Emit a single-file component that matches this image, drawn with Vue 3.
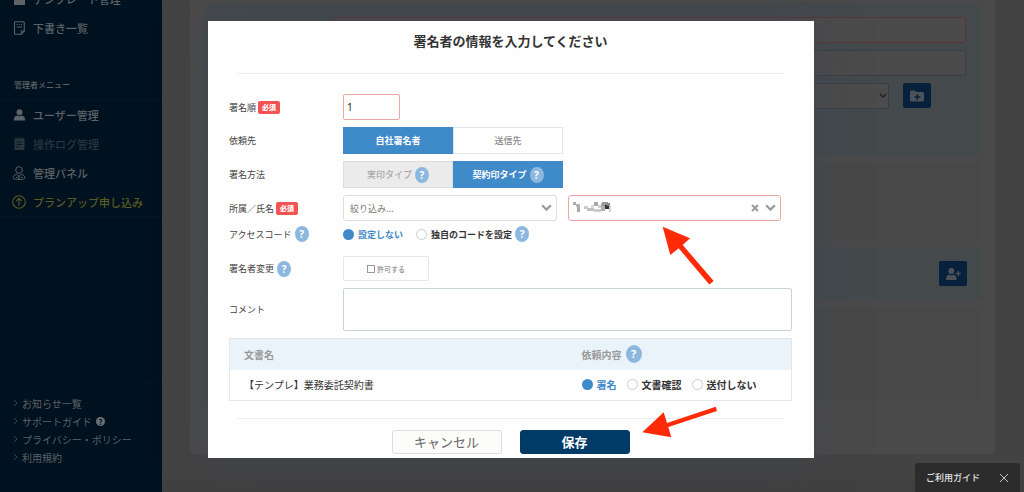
<script setup>
import { ref } from 'vue'

const order = ref('1')
const comment = ref('')
const accessCode = ref('none')
const request = ref('sign')
const allowChange = ref(false)

const adminMenu = [
  { label: 'ユーザー管理', icon: 'user' },
  { label: '操作ログ管理', icon: 'log', tone: 'faded' },
  { label: '管理パネル', icon: 'panel' },
  { label: 'プランアップ申し込み', icon: 'up', tone: 'plan' },
]
const footerLinks = [
  { label: 'お知らせ一覧' },
  { label: 'サポートガイド', help: true },
  { label: 'プライバシー・ポリシー' },
  { label: '利用規約' },
]
const requests = [
  { value: 'sign', label: '署名' },
  { value: 'check', label: '文書確認' },
  { value: 'skip', label: '送付しない' },
]
</script>

<template>
  <div class="page" lang="ja">
    <nav class="sidebar">
      <ul class="menu top-menu">
        <li>
          <a href="#">
            <svg class="icon" viewBox="0 0 14 14"><path d="M2 1h11v12H2z" fill="currentColor" /><path d="M5 4h5v4H5z" fill="#00111f" /></svg>
            <span>テンプレート管理</span>
          </a>
        </li>
        <li>
          <a href="#">
            <svg class="icon" viewBox="0 0 14 14" fill="none" stroke="currentColor" stroke-width="1.1"><path d="M3.5.7h7.800q1 0 1 1V10l-3 3.300H3.500q-1 0-1-1V1.700q0-1 1-1z" /><path d="M9.300 13.200V10h3M4.500 3.500h1M6.800 3.500h1M9 3.500h1.200M4.500 6h5.700" /></svg>
            <span>下書き一覧</span>
          </a>
        </li>
      </ul>
      <p class="menu-title">管理者メニュー</p>
      <ul class="menu admin-menu">
        <li v-for="item in adminMenu" :key="item.label">
          <a href="#" :class="item.tone">
            <svg v-if="item.icon === 'user'" class="icon" viewBox="0 0 14 14" fill="currentColor"><circle cx="7.500" cy="4.300" r="3" /><path d="M1.800 12.500c0-3.500 1.500-4.700 3.500-5.100q2.200 1.400 4.400 0c2 .4 3.500 1.600 3.500 5.100z" /></svg>
            <svg v-else-if="item.icon === 'log'" class="icon" viewBox="0 0 14 14"><path d="M2.500 1.500h10v11.500h-10z" fill="currentColor" /><path d="M4 .5v2M6.300.5v2M8.600.5v2M11 .5v2" stroke="currentColor" /><path d="M4.500 5h6M4.500 7.500h6M4.500 10h3" stroke="#00111f" stroke-width=".8" /></svg>
            <svg v-else-if="item.icon === 'panel'" class="icon" viewBox="0 0 14 14" fill="none" stroke="currentColor"><circle cx="7" cy="4" r="3.300" /><path d="M4.700 8.300C2.500 8.700 1.200 9.800 1.200 11.800c0 1 1.500 1.700 5.800 1.700s5.800-.7 5.800-1.700c0-2-1.300-3.100-3.500-3.500L7 10.500zM7 10v3M4 11.500h1.500M9 11.500h1.500" /></svg>
            <svg v-else class="icon" viewBox="0 0 14 14" fill="none" stroke="currentColor" stroke-width="1.100"><circle cx="7" cy="7" r="6.300" /><path d="M7 10.800V3.500M4.200 6.200 7 3.400l2.800 2.800" /></svg>
            <span>{{ item.label }}</span>
          </a>
        </li>
      </ul>
      <ul class="links">
        <li v-for="link in footerLinks" :key="link.label">
          <a href="#">
            <svg class="caret" viewBox="0 0 5 8" fill="none" stroke="#3a444d"><path d="m1 1 3 3-3 3" /></svg>
            <span>{{ link.label }}</span>
            <span v-if="link.help" class="mini-help">?</span>
          </a>
        </li>
      </ul>
    </nav>

    <main class="main">
      <div class="card">
        <section class="panel tinted fields">
          <input class="field required" type="text" aria-label="文書" />
          <input class="field" type="text" aria-label="メモ" />
          <div class="field-row">
            <div class="folder-select">
              <select class="field" aria-label="フォルダ"></select>
              <svg viewBox="0 0 8 6" fill="none" stroke="#152028" stroke-width="1.300"><path d="m1 1 3 3 3-3" /></svg>
            </div>
            <button class="square" type="button" aria-label="フォルダを追加">
              <svg viewBox="0 0 16 14"><path d="M1 3q0-1.500 1.500-1.500H6l1.500 1.500h6q1.500 0 1.500 1.500v6.500q0 1.500-1.500 1.500h-11Q1 12.500 1 11z" fill="#4c5258" /><path d="M8.300 5v6M5.300 8h6" stroke="#07203b" stroke-width="1.500" /></svg>
            </button>
          </div>
        </section>
        <section class="panel medium"></section>
        <section class="panel tinted signer">
          <button class="square" type="button" aria-label="署名者を追加">
            <svg viewBox="0 0 16 14" fill="#4c5258"><circle cx="6.300" cy="4" r="3" /><path d="M1 13c0-3.500 1-5 3-5.300q2.300 1.100 4.600 0c2 .3 3 1.800 3 5.300z" /><path d="M13.300 4v5M10.800 6.500h5" stroke="#4c5258" stroke-width="1.300" /></svg>
          </button>
        </section>
        <section class="panel tall"></section>
      </div>
      <footer class="page-footer"></footer>
    </main>

    <div class="overlay">
      <form class="modal" role="dialog" aria-labelledby="modal-title" @submit.prevent>
        <h2 id="modal-title">署名者の情報を入力してください</h2>
        <hr />
        <div class="form">
          <div class="row">
            <label class="label" for="order">署名順<span class="badge">必須</span></label>
            <input id="order" v-model="order" class="order" type="text" />
          </div>
          <div class="row">
            <span class="label">依頼先</span>
            <div class="toggle">
              <button type="button" class="on">自社署名者</button>
              <button type="button">送信先</button>
            </div>
          </div>
          <div class="row">
            <span class="label">署名方法</span>
            <div class="toggle">
              <button type="button" class="off" disabled>実印タイプ<span class="help">?</span></button>
              <button type="button" class="on">契約印タイプ<span class="help">?</span></button>
            </div>
          </div>
          <div class="row member-row">
            <label class="label" for="filter">所属／氏名<span class="badge">必須</span></label>
            <div class="selects">
              <div class="combo">
                <select id="filter"><option>絞り込み...</option></select>
                <svg class="chevron" viewBox="0 0 10 7" fill="none" stroke="#999" stroke-width="2"><path d="m1 1 4 4 4-4" /></svg>
              </div>
              <div class="combo invalid">
                <svg class="mosaic" viewBox="0 0 38 12">
                  <path d="M0 1h3v3H0z" fill="#aaa" /><path d="M3 3h4v3H3z" fill="#b5b5b5" /><path d="M4 6h3v5H4z" fill="#aaa" />
                  <path d="M11 5h4v3h-4z" fill="#ccc" /><path d="M14 7h7v3h-7z" fill="#c2c2c2" /><path d="M18 4h3v3h-3z" fill="#ddd" />
                  <path d="M21 1h4v4h-4z" fill="#aaa" /><path d="M25 4h4v3h-4z" fill="#d0d0d0" /><path d="M21 8h7v3h-7z" fill="#ccc" /><path d="M28 2h4v8h-4z" fill="#b0b0b0" />
                  <path d="M29 1h6v4h-6z" fill="#999" /><path d="M32 4h4v4h-4z" fill="#333" /><path d="M34 2h3v3h-3z" fill="#888" /><path d="M36 5h2v6h-2z" fill="#d0d0d0" />
                </svg>
                <select aria-label="氏名"></select>
                <button class="clear" type="button" aria-label="クリア">
                  <svg viewBox="0 0 8 8" fill="none" stroke="#999" stroke-width="2"><path d="m1 1 6 6M7 1 1 7" /></svg>
                </button>
                <svg class="chevron" viewBox="0 0 10 7" fill="none" stroke="#999" stroke-width="2"><path d="m1 1 4 4 4-4" /></svg>
              </div>
            </div>
          </div>
          <div class="row access-row">
            <span class="label">アクセスコード<span class="help">?</span></span>
            <div class="radios">
              <label><input v-model="accessCode" type="radio" name="access" value="none" /><span>設定しない</span></label>
              <label><input v-model="accessCode" type="radio" name="access" value="own" /><span>独自のコードを設定</span></label>
              <span class="help">?</span>
            </div>
          </div>
          <div class="row">
            <span class="label">署名者変更<span class="help">?</span></span>
            <label class="allow"><input v-model="allowChange" type="checkbox" />許可する</label>
          </div>
          <div class="row">
            <label class="label" for="comment">コメント</label>
            <textarea id="comment" v-model="comment"></textarea>
          </div>
        </div>
        <table>
          <thead>
            <tr>
              <th class="doc-col">文書名</th>
              <th><span class="th-help">依頼内容<span class="help large">?</span></span></th>
            </tr>
          </thead>
          <tbody>
            <tr>
              <td>【テンプレ】業務委託契約書</td>
              <td>
                <div class="radios wide">
                  <label v-for="r in requests" :key="r.value"><input v-model="request" type="radio" name="request" :value="r.value" /><span>{{ r.label }}</span></label>
                </div>
              </td>
            </tr>
          </tbody>
        </table>
        <hr class="bottom-rule" />
        <div class="actions">
          <button class="cancel" type="button">キャンセル</button>
          <button class="save" type="submit">保存</button>
        </div>
        <svg class="arrows" viewBox="208 21 606 437" fill="#ff2a08">
          <path d="M662.700 226.700 690 238.300l-7.300 6.700 31 36-4.400 3.600-30.600-36.300-8.400 6.700z" />
          <path d="M642.300 432.300 663.700 412.300l3.300 10.700 48.700-16.300 1.300 4.300-48.700 16 3 10.300z" />
        </svg>
      </form>
    </div>

    <aside class="guide">
      <span>ご利用ガイド</span>
      <button type="button" aria-label="閉じる">
        <svg viewBox="0 0 10 10" fill="none" stroke="#c4c4c4"><path d="m1 1 8 8M9 1 1 9" /></svg>
      </button>
    </aside>
  </div>
</template>

<style>
body {
  background: #434343;
}
</style>

<style scoped>
* {
  box-sizing: border-box;
}
.page {
  position: relative;
  display: flex;
  height: 100vh;
  overflow: hidden;
  background: #434343;
  font-family: "Noto Sans CJK JP", "Noto Sans", sans-serif;
  font-size: 9px;
  color: #444;
}
button,
input,
select,
textarea {
  font: inherit;
  margin: 0;
}
button {
  padding: 0;
}
ul {
  list-style: none;
  margin: 0;
  padding: 0;
}
a {
  color: inherit;
  text-decoration: none;
}
svg {
  display: block;
  flex: none;
}

.sidebar {
  display: flex;
  flex-direction: column;
  flex: none;
  width: 162px;
  background: #00111f;
  color: #5d6267;
}
.menu a {
  display: flex;
  align-items: center;
  gap: 7px;
  height: 29px;
  padding-left: 12px;
  font-size: 11px;
  font-weight: 500;
}
.top-menu {
  margin-top: -16px;
}
.icon {
  width: 14px;
  height: 14px;
}
.menu .faded {
  color: #29353f;
}
.menu .plan {
  color: #5b5b22;
}
.menu-title {
  margin: 29px 0 0;
  padding-left: 14px;
  font-size: 8px;
  line-height: 28px;
  font-weight: 500;
}
.admin-menu {
  border-top: 1px solid #061624;
  border-bottom: 1px solid #061624;
}
.links {
  margin-top: auto;
  border-top: 1px solid #061624;
  padding: 11px 0 26px 13px;
}
.links a {
  display: flex;
  align-items: center;
  gap: 4px;
  height: 18px;
  font-size: 10px;
}
.caret {
  width: 5px;
  height: 8px;
}
.mini-help {
  width: 9px;
  height: 9px;
  border-radius: 50%;
  background: #6a6f73;
  color: #00111f;
  font-size: 8px;
  line-height: 9px;
  font-weight: 700;
  text-align: center;
}

.main {
  display: flex;
  flex-direction: column;
  flex: 1;
  min-width: 0;
}
.card {
  display: flex;
  flex-direction: column;
  gap: 7px;
  margin: 0 29px 0 28px;
  padding: 3px 14px 54px 15px;
  background: #4a4a4a;
  border-radius: 0 0 3px 3px;
}
.panel {
  background: #484848;
}
.tinted {
  background: #44494c;
}
.fields {
  display: flex;
  flex-direction: column;
  gap: 7px;
  padding: 14px 15px 46px 128px;
}
.field {
  width: 100%;
  height: 26px;
  background: #4b4b4b;
  border: 1px solid #363f45;
  border-radius: 2px;
  appearance: none;
}
.field.required {
  border: 1px solid #5d3338;
}
.field-row {
  display: flex;
  gap: 14px;
  padding-right: 35px;
}
.folder-select {
  display: flex;
  align-items: center;
  flex: 1;
}
.folder-select svg {
  width: 8px;
  height: 6px;
  margin-left: -10px;
  margin-right: 2px;
}
.square {
  display: flex;
  align-items: center;
  justify-content: center;
  width: 28px;
  height: 25px;
  border: 0;
  border-radius: 2px;
  background: #07203b;
}
.square svg {
  width: 16px;
  height: 14px;
}
.medium {
  height: 78px;
}
.signer {
  display: flex;
  justify-content: flex-end;
  padding: 14px;
}
.tall {
  height: 93px;
}
.page-footer {
  flex: 0 0 13px;
  margin-top: auto;
  background: #404040;
}

.overlay {
  position: absolute;
  inset: 0;
  display: flex;
  justify-content: center;
  align-items: flex-start;
  padding: 21px 2px 0 0;
}
.modal {
  position: relative;
  width: 100%;
  max-width: 606px;
  padding: 0 22px 4px 21px;
  background: #fefefe;
  box-shadow: 0 0 40px rgba(62, 68, 84, 0.5);
}
h2 {
  margin: 0 0 12px;
  font-size: 13px;
  line-height: 40px;
  font-weight: 700;
  text-align: center;
  color: #333;
}
hr {
  height: 1px;
  margin: 0 9px;
  border: 0;
  background: #e9ebec;
}
.form {
  padding-top: 20px;
}
.row {
  display: flex;
  align-items: center;
  margin-bottom: 7px;
}
.label {
  display: flex;
  align-items: center;
  flex: none;
  width: 114px;
}
.badge {
  margin-left: 2px;
  padding: 0 4px;
  border-radius: 2px;
  background: #f55353;
  color: #fff;
  font-size: 7px;
  line-height: 13px;
  font-weight: 900;
}
.help {
  width: 14px;
  height: 16px;
  margin-left: 3px;
  border-radius: 50%;
  background: #8cb8e0;
  color: #fff;
  font-family: "Open Sans", sans-serif;
  font-size: 10px;
  line-height: 16px;
  font-weight: 700;
  text-align: center;
}
.help.large {
  width: 16px;
  height: 18px;
  margin-left: 4px;
  font-size: 11px;
  line-height: 18px;
}
.order {
  width: 57px;
  height: 26px;
  padding: 0 3px;
  border: 1px solid #f0a5a5;
  border-radius: 2px;
  background: #fff;
  font-family: "Noto Sans", sans-serif;
  font-size: 10px;
  color: #222;
}
.toggle {
  display: flex;
  width: 220px;
}
.toggle button {
  display: flex;
  align-items: center;
  justify-content: center;
  flex: 1;
  height: 27px;
  border: 1px solid #dde6ea;
  background: #fff;
  color: #888;
  font-weight: 500;
}
.toggle .on {
  border-color: #3f8ac9;
  background: #3f8ac9;
  color: #fff;
  font-weight: 700;
}
.toggle .off {
  border-color: #ddd;
  background: #ebebeb;
  color: #aaa;
}
.member-row {
  margin-bottom: 3px;
}
.selects {
  display: grid;
  grid-template-columns: 1fr 1fr;
  gap: 11px;
  flex: 1;
  padding-right: 11px;
}
.combo {
  display: flex;
  align-items: center;
  height: 26px;
  padding: 0 4px 0 6px;
  border: 1px solid #ddd;
  border-radius: 3px;
  background: #fff;
}
.combo.invalid {
  padding-left: 4px;
  border-color: #f0a5a5;
}
.combo select {
  flex: 1;
  min-width: 0;
  padding: 0;
  border: 0;
  background: transparent;
  color: #777;
  appearance: none;
}
.chevron {
  width: 11px;
  height: 8px;
}
.mosaic {
  width: 38px;
  height: 12px;
  margin-bottom: 3px;
}
.clear {
  margin-right: 6px;
  border: 0;
  background: none;
}
.clear svg {
  width: 8px;
  height: 8px;
}
.access-row {
  height: 20px;
  margin-bottom: 12px;
}
.radios {
  display: flex;
  align-items: center;
  font-weight: 700;
  color: #333;
}
.radios label {
  display: flex;
  align-items: center;
  gap: 4px;
  margin-right: 13px;
}
.radios label:nth-of-type(2) {
  margin-right: 0;
}
.radios input {
  width: 11px;
  height: 11px;
  border: 1px solid #ccc;
  border-radius: 50%;
  background: #fff;
  appearance: none;
}
.radios input:checked {
  border: 0;
  background: #3f8ac9;
}
.radios input:checked + span {
  color: #3f8ac9;
}
.radios.wide label,
.radios.wide label:nth-of-type(2) {
  margin-right: 10px;
}
.allow {
  display: flex;
  align-items: center;
  justify-content: center;
  gap: 2px;
  width: 86px;
  height: 25px;
  border: 1px solid #e2e8ea;
  border-radius: 2px;
  font-size: 7px;
  color: #777;
}
.allow input {
  width: 8px;
  height: 8px;
  border: 1px solid #999;
  background: #fff;
  appearance: none;
}
textarea {
  flex: 1;
  height: 43px;
  border: 1px solid #c8d4da;
  border-radius: 2px;
  background: #fff;
  resize: none;
}
table {
  width: 100%;
  border: 1px solid #e0e8ec;
  border-collapse: collapse;
  font-size: 10px;
  color: #333;
}
th,
td {
  height: 31px;
  padding: 0 0 0 14px;
  text-align: left;
}
th {
  background: #eaf3fa;
  color: #999;
  font-weight: 700;
}
td:last-child,
th:last-child {
  padding-left: 0;
}
.doc-col {
  width: 352px;
}
.th-help {
  display: flex;
  align-items: center;
}
.bottom-rule {
  margin-top: 17px;
}
.actions {
  display: flex;
  justify-content: center;
  gap: 18px;
  padding-top: 11px;
}
.actions button {
  width: 110px;
  height: 24px;
  border-radius: 3px;
  font-size: 13px;
  line-height: 20px;
}
.cancel {
  border: 1px solid #ddd;
  background: #fcfcfb;
  color: #666;
}
.save {
  border: 1px solid #003a66;
  background: #003a66;
  color: #fff;
  font-weight: 700;
}
.arrows {
  position: absolute;
  top: 0;
  left: 0;
  width: 606px;
  height: 437px;
  pointer-events: none;
}

.guide {
  position: absolute;
  right: 4px;
  bottom: 0;
  display: flex;
  align-items: center;
  justify-content: space-between;
  width: 105px;
  height: 29px;
  padding: 0 11px;
  border-radius: 3px 3px 0 0;
  background: #2c2c2c;
  color: #e4e4e4;
  font-weight: 500;
}
.guide button {
  border: 0;
  background: none;
}
.guide svg {
  width: 10px;
  height: 10px;
}
</style>
